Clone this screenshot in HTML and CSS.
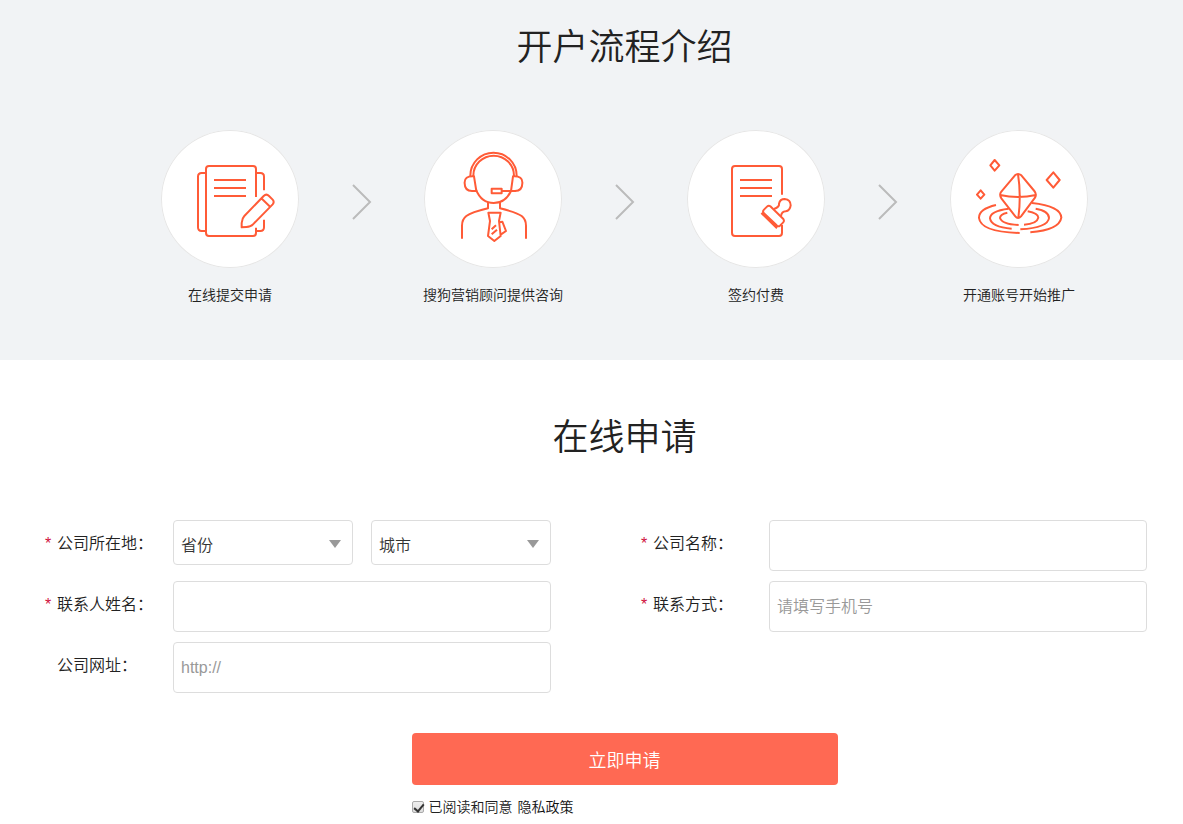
FILE: index.html
```html
<!DOCTYPE html>
<html lang="zh-CN">
<head>
<meta charset="utf-8">
<title>在线申请</title>
<link rel="stylesheet" href="styles.css">
</head>
<body>
<section class="process">
  <h2 class="title">开户流程介绍</h2>
  <ol class="steps">
    <li class="step">
      <svg class="step-icon" viewBox="18 15 414 414" aria-hidden="true">
        <path d="M151 144H140Q129 144 129 155V307Q129 318 140 318H151M305 144H316Q327 144 327 155V196M305 318H316Q327 318 327 307V284"/>
        <path d="M303 216V132Q303 123 294 123H162Q153 123 153 132V323Q153 333 162 333H294Q303 333 303 323V308"/>
        <path d="M177 165H273M177 189H273M177 213H273"/>
        <path d="M260 307V294Q261 280 268 273L326 213Q334 205 342 213L353 224Q359 231 353 238L294 298Q288 305 274 306ZM319 220L346 246"/>
      </svg>
      <span class="step-name">在线提交申请</span>
    </li>
    <li class="arrow" aria-hidden="true"><svg class="arrow-icon" viewBox="0 0 20 36"><path d="M1 1L18 18L1 35"/></svg></li>
    <li class="step">
      <svg class="step-icon" viewBox="18 15 414 414" aria-hidden="true">
        <path d="M157 156V152A69.500 69 0 0 1 296 152V156M166 156V152A61 60 0 0 1 288 152V156"/>
        <path d="M168 154Q138 152 140 175Q140 198 162 198H175ZM285 154Q315 152 313 175Q313 198 291 198H279Z"/>
        <path d="M174 194Q190 234 227 234Q262 234 279 198M221 191H251V205H221ZM251 198H293"/>
        <path d="M210 230V250Q160 262 145 273Q132 283 132 302V341M246 230V250Q296 262 311 273Q324 283 324 302V341"/>
        <path d="M211 263H248L243 288L248 333L229 348L210 333L216 288ZM245 292L253 290L264 318L248 329M221 313L234 301M221 328L237 314"/>
      </svg>
      <span class="step-name">搜狗营销顾问提供咨询</span>
    </li>
    <li class="arrow" aria-hidden="true"><svg class="arrow-icon" viewBox="0 0 20 36"><path d="M1 1L18 18L1 35"/></svg></li>
    <li class="step">
      <svg class="step-icon" viewBox="18 15 414 414" aria-hidden="true">
        <path d="M303 209V132Q303 123 294 123H162Q153 123 153 132V323Q153 333 162 333H294Q303 333 303 323V300"/>
        <path d="M177 165H273M177 189H273M177 213H273"/>
        <path d="M268 244L307 282Q311 288 306 293L297 302Q292 306 287 301L248 264Q244 259 249 254L258 245Q263 240 268 244ZM241 264L288 310"/>
        <path d="M279 252Q296 246 294 236Q297 222 311 222Q329 224 329 241Q327 257 314 259Q302 260 300 273"/>
      </svg>
      <span class="step-name">签约付费</span>
    </li>
    <li class="arrow" aria-hidden="true"><svg class="arrow-icon" viewBox="0 0 20 36"><path d="M1 1L18 18L1 35"/></svg></li>
    <li class="step">
      <svg class="step-icon" viewBox="18 15 414 414" aria-hidden="true">
        <path d="M213 151Q222 143 232 151L271 198Q279 208 273 218L231 274Q222 284 214 274L172 220Q165 208 172 200ZM222 147Q232 210 223 280M168 210Q222 222 276 210"/>
        <path d="M152 105L166 121L152 137L139 121ZM110 196L121 209L110 221L99 209ZM328 142L347 165L328 188L308 165Z"/>
        <path d="M156 240Q104 252 105 279Q110 321 227 324M264 234Q350 243 352 278Q346 315 259 322"/>
        <path d="M194 251Q138 258 138 280Q142 306 203 311M275 251Q315 258 315 279Q312 308 229 313"/>
        <path d="M190 263Q168 268 168 279Q174 298 224 300M251 259Q283 265 283 278Q279 297 240 299"/>
      </svg>
      <span class="step-name">开通账号开始推广</span>
    </li>
  </ol>
</section>
<section class="apply">
  <h2 class="title">在线申请</h2>
  <form>
    <div class="fields">
      <div class="field">
        <label class="field-label" for="province"><span class="required">*</span>公司所在地：</label>
        <div class="selects">
          <div class="select-box"><select class="select" id="province"><option>省份</option></select></div>
          <div class="select-box"><select class="select" id="city" aria-label="城市"><option>城市</option></select></div>
        </div>
      </div>
      <div class="field">
        <label class="field-label" for="company"><span class="required">*</span>公司名称：</label>
        <input class="input" id="company" type="text">
      </div>
      <div class="field">
        <label class="field-label" for="contact"><span class="required">*</span>联系人姓名：</label>
        <input class="input" id="contact" type="text">
      </div>
      <div class="field">
        <label class="field-label" for="phone"><span class="required">*</span>联系方式：</label>
        <input class="input" id="phone" type="tel" placeholder="请填写手机号">
      </div>
      <div class="field">
        <label class="field-label" for="site"><span class="required"></span>公司网址：</label>
        <input class="input" id="site" type="text" placeholder="http://">
      </div>
    </div>
    <div class="actions">
      <div class="actions-inner">
        <button class="submit" type="submit">立即申请</button>
        <div class="agree">
          <input class="check" id="agree" type="checkbox" checked>
          <label for="agree">已阅读和同意</label>
          <a class="policy" href="#">隐私政策</a>
        </div>
      </div>
    </div>
  </form>
</section>
</body>
</html>
```
FILE: styles.css
```css
* {
  box-sizing: border-box;
}

body {
  margin: 0;
  color: #222;
  background: #fff;
  font-family: "Liberation Sans", "Noto Sans CJK SC", sans-serif;
  font-size: 16px;
  font-weight: 350;
}

.title {
  margin: 0;
  padding-left: 66px;
  font-size: 36px;
  font-weight: 350;
  line-height: 56px;
  text-align: center;
}

.process {
  padding: 20px 0 54px;
  background: #f1f3f5;
}

.steps {
  display: flex;
  justify-content: space-between;
  margin: 54px 0 0;
  padding: 0 95px 0 161px;
  list-style: none;
}

.step {
  display: flex;
  flex-direction: column;
  align-items: center;
  gap: 16px;
  width: 138px;
}

.step-icon {
  width: 138px;
  height: 138px;
  background: #fff;
  border-radius: 50%;
  box-shadow: inset 0 0 0 1px #e6e6e6;
  fill: none;
  stroke: #ff5b37;
  stroke-width: 6;
  stroke-linejoin: round;
}

.step-name {
  font-size: 14px;
  line-height: 22px;
  white-space: nowrap;
}

.arrow {
  padding-top: 54px;
}

.arrow-icon {
  display: block;
  width: 20px;
  height: 36px;
  fill: none;
  stroke: #bbb;
  stroke-width: 2;
}

.apply {
  padding: 50px 0 0;
}

.fields {
  display: grid;
  grid-template-columns: 1fr 1fr;
  gap: 10px 89px;
  margin-top: 54px;
  padding: 0 36px 0 44px;
}

.field {
  display: grid;
  grid-template-columns: 129px 1fr;
  align-items: start;
}

.field-label {
  display: flex;
  line-height: 47px;
}

.required {
  width: 13px;
  padding-left: 1px;
  color: #d0103c;
}

.input,
.select {
  width: 100%;
  border: 1px solid #ddd;
  border-radius: 4px;
  background: #fff;
  font: inherit;
}

.input {
  height: 51px;
  padding: 0 7px;
  color: #222;
}

.input::placeholder {
  color: #999;
}

.selects {
  display: grid;
  grid-template-columns: 1fr 1fr;
  gap: 18px;
}

.select-box {
  position: relative;
}

.select {
  display: block;
  height: 45px;
  padding: 5px 7px 0;
  color: #333;
  appearance: none;
}

.select-box::after {
  content: "";
  position: absolute;
  top: 20px;
  right: 12px;
  border: 6px solid transparent;
  border-top: 8px solid #999;
  border-bottom: 0;
  pointer-events: none;
}

.actions {
  display: flex;
  justify-content: center;
  margin-top: 40px;
  padding-left: 66px;
}

.actions-inner {
  width: 426px;
}

.submit {
  width: 100%;
  height: 52px;
  border: 0;
  border-radius: 4px;
  background: #ff6953;
  color: #fff;
  font: inherit;
  font-size: 18px;
}

.agree {
  display: flex;
  align-items: center;
  gap: 5px;
  margin-top: 11px;
  font-size: 14px;
  line-height: 22px;
}

.check {
  position: relative;
  width: 12px;
  height: 12px;
  margin: 0;
  border: 1px solid #aaa;
  border-radius: 2px;
  background: linear-gradient(#eee, #ddd);
  appearance: none;
}

.check:checked::after {
  content: "";
  position: absolute;
  top: 0;
  left: 3px;
  width: 4px;
  height: 8px;
  border: solid #333;
  border-width: 0 2px 2px 0;
  transform: rotate(40deg);
}

.policy {
  color: #111;
  text-decoration: none;
}
```
